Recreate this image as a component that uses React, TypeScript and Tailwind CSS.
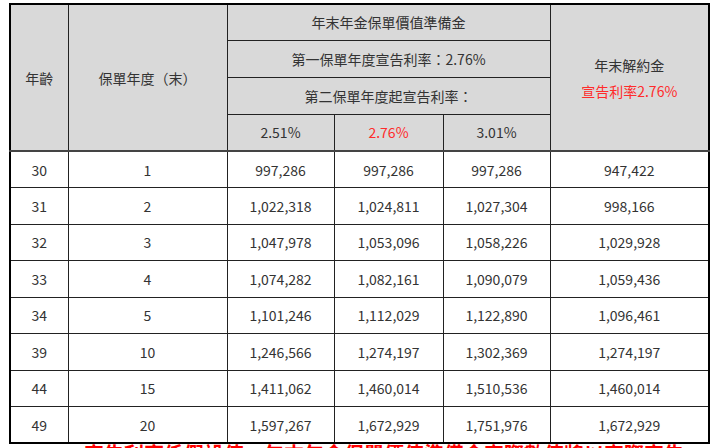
import React from "react";

const rows = [
  ["30", "1", "997,286", "997,286", "997,286", "947,422"],
  ["31", "2", "1,022,318", "1,024,811", "1,027,304", "998,166"],
  ["32", "3", "1,047,978", "1,053,096", "1,058,226", "1,029,928"],
  ["33", "4", "1,074,282", "1,082,161", "1,090,079", "1,059,436"],
  ["34", "5", "1,101,246", "1,112,029", "1,122,890", "1,096,461"],
  ["39", "10", "1,246,566", "1,274,197", "1,302,369", "1,274,197"],
  ["44", "15", "1,411,062", "1,460,014", "1,510,536", "1,460,014"],
  ["49", "20", "1,597,267", "1,672,929", "1,751,976", "1,672,929"],
];

const th = "border border-[#222] bg-[#d9d9d9] font-normal text-center align-middle";
const td = "border border-[#222] text-center align-middle";

export default function App() {
  return (
    <div
      className="w-[720px] h-[448px] overflow-hidden bg-white text-[14px] text-[#333]"
      style={{ fontFamily: '"Noto Sans CJK TC", "Noto Sans", sans-serif' }}
    >
      <div className="pt-[3px] pl-[9px]">
        <table className="w-[701px] table-fixed border-collapse border-2 border-black leading-[18px]">
          <colgroup>
            <col className="w-[58px]" />
            <col className="w-[159px]" />
            <col className="w-[107px]" />
            <col className="w-[109px]" />
            <col className="w-[107px]" />
            <col />
          </colgroup>
          <thead>
            <tr className="h-[36px]">
              <th rowSpan={4} className={th}>年齡</th>
              <th rowSpan={4} className={th}>保單年度（末）</th>
              <th colSpan={3} className={th}>年末年金保單價值準備金</th>
              <th rowSpan={4} className={th}>
                <div>年末解約金</div>
                <div className="mt-[8px] text-[#ff2b2b]">宣告利率2.76%</div>
              </th>
            </tr>
            <tr className="h-[37px]">
              <th colSpan={3} className={th}>第一保單年度宣告利率：2.76%</th>
            </tr>
            <tr className="h-[37px]">
              <th colSpan={3} className={th}>第二保單年度起宣告利率：</th>
            </tr>
            <tr className="h-[37px] border-b-2 border-b-[#444]">
              <th className={th}>2.51%</th>
              <th className={`${th} text-[#ff2b2b]`}>2.76%</th>
              <th className={th}>3.01%</th>
            </tr>
          </thead>
          <tbody>
            {rows.map((r) => (
              <tr key={r[0]} className="h-[36.5px]">
                {r.map((c, i) => (
                  <td key={i} className={td}>{c}</td>
                ))}
              </tr>
            ))}
          </tbody>
        </table>
      </div>
      <div className="ml-[84px] w-[604px] text-[20px] leading-[22px] font-bold text-[#ff0000] -mt-[1px]">
        宣告利率係假設值，年末年金保單價值準備金實際數值將以實際宣告利率計算為準
      </div>
    </div>
  );
}
